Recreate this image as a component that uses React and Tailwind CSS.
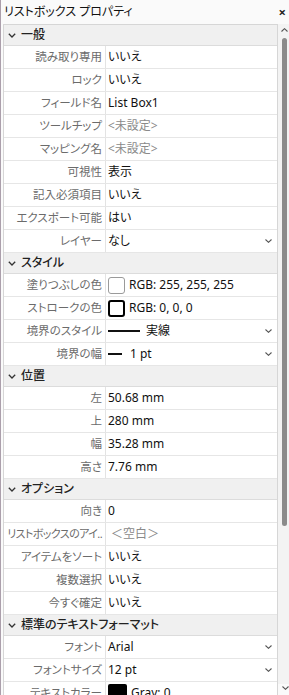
import React from "react";

const Chev = ({ className = "" }) => (
  <svg width="8" height="5" viewBox="0 0 8 5" className={className}>
    <path d="M0.8 0.8 L4 4 L7.2 0.8" fill="none" stroke="currentColor" strokeWidth="1.3" />
  </svg>
);

const Drop = () => (
  <svg width="7" height="4" viewBox="0 0 7 4" className="text-[#555]">
    <path d="M0.5 0.5 L3.5 3.3 L6.5 0.5" fill="none" stroke="currentColor" strokeWidth="1.1" />
  </svg>
);

const Swatch = ({ kind }) => {
  if (kind === "white")
    return <span className="inline-block w-[17px] h-[17px] rounded-[3px] border border-[#9a9a9a] bg-white mr-[4px]" />;
  if (kind === "stroke")
    return <span className="inline-block w-[17px] h-[17px] rounded-[3px] border-2 border-black bg-white mr-[4px]" />;
  return <span className="inline-block w-[19px] h-[18px] rounded-[2px] bg-black mr-[4px]" />;
};

const sections = [
  {
    title: "一般",
    rows: [
      { l: "読み取り専用", v: "いいえ" },
      { l: "ロック", v: "いいえ" },
      { l: "フィールド名", v: "List Box1" },
      { l: "ツールチップ", v: "<未設定>", gray: true },
      { l: "マッピング名", v: "<未設定>", gray: true },
      { l: "可視性", v: "表示" },
      { l: "記入必須項目", v: "いいえ" },
      { l: "エクスポート可能", v: "はい" },
      { l: "レイヤー", v: "なし", drop: true },
    ],
  },
  {
    title: "スタイル",
    rows: [
      { l: "塗りつぶしの色", v: "RGB: 255, 255, 255", swatch: "white" },
      { l: "ストロークの色", v: "RGB: 0, 0, 0", swatch: "stroke" },
      { l: "境界のスタイル", v: "実線", line: 32, drop: true },
      { l: "境界の幅", v: "1 pt", line: 14, drop: true },
    ],
  },
  {
    title: "位置",
    rows: [
      { l: "左", v: "50.68 mm" },
      { l: "上", v: "280 mm" },
      { l: "幅", v: "35.28 mm" },
      { l: "高さ", v: "7.76 mm" },
    ],
  },
  {
    title: "オプション",
    rows: [
      { l: "向き", v: "0" },
      { l: "リストボックスのアイ..", v: " ＜空白＞", gray: true, tight: true },
      { l: "アイテムをソート", v: "いいえ" },
      { l: "複数選択", v: "いいえ" },
      { l: "今すぐ確定", v: "いいえ" },
    ],
  },
  {
    title: "標準のテキストフォーマット",
    rows: [
      { l: "フォント", v: "Arial", drop: true },
      { l: "フォントサイズ", v: "12 pt", drop: true },
      { l: "テキストカラー", v: "Gray: 0", swatch: "black" },
    ],
  },
];

export default function App() {
  return (
    <div
      className="relative w-[289px] h-[695px] overflow-hidden bg-[#fafafa] border-l border-[#ab9fab] text-[12px] text-[#111] [font-feature-settings:'palt'] flex flex-col"
      style={{ fontFamily: '"Noto Sans", "Noto Sans CJK JP", sans-serif' }}
    >
      <div className="h-[24px] shrink-0 flex items-center justify-between pl-[3px] pr-[3px]">
        <span className="text-[12px] text-[#111] leading-none">リストボックス プロパティ</span>
        <span className="text-[13px] leading-none text-[#222] font-bold">×</span>
      </div>
      <div className="flex flex-1 min-h-0 pl-[2px]">
        <div className="w-[275px] shrink-0 border border-[#d6d6d6] border-b-0 bg-white overflow-hidden">
          {sections.map((s) => (
            <div key={s.title}>
              <div className="h-[21px] flex items-center bg-[#f0f0f0] border-b border-[#dcdcdc] pl-[4px] text-[#222]">
                <Chev className="text-[#333] mr-[5px]" />
                <span className="font-medium leading-none">{s.title}</span>
              </div>
              {s.rows.map((r) => (
                <div key={r.l} className="h-[23px] shrink-0 flex border-b border-[#e6e6e6]">
                  <div
                    className={
                      "w-[102px] shrink-0 border-r border-[#e3e3e3] flex items-center justify-end pr-[3px] text-[#6b6b6b] whitespace-nowrap overflow-hidden " +
                      (r.tight ? "tracking-[-0.6px] text-[11px]" : "text-[11.5px]")
                    }
                  >
                    {r.l}
                  </div>
                  <div className="flex-1 flex items-center pl-[2px] pr-[5px]">
                    {r.swatch && <Swatch kind={r.swatch} />}
                    {r.line && <span className={"inline-block h-[1.5px] bg-[#111] " + (r.line === 32 ? "w-[32px] mr-[6px]" : "w-[14px] mr-[8px]")} />}
                    <span className={"flex-1 whitespace-pre leading-none " + (r.gray ? "text-[#8a8a8a]" : "text-[#111]")}>
                      {r.v}
                    </span>
                    {r.drop && <Drop />}
                  </div>
                </div>
              ))}
            </div>
          ))}
        </div>
        <div className="w-[11px] shrink-0 bg-[#f3f3f3] flex flex-col items-center pt-[4px] h-[660px]">
          <svg width="7" height="4" viewBox="0 0 7 4" className="text-[#555] ml-[1px]">
            <path d="M0.5 3.5 L3.5 0.7 L6.5 3.5" fill="none" stroke="currentColor" strokeWidth="1.1" />
          </svg>
          <div className="mt-[6px] ml-[2px] w-[5px] h-[488px] rounded-[3px] bg-[#8b8b8b]" />
        </div>
      </div>
      <div className="absolute left-[281px] top-[686px]">
        <Drop />
      </div>
    </div>
  );
}
